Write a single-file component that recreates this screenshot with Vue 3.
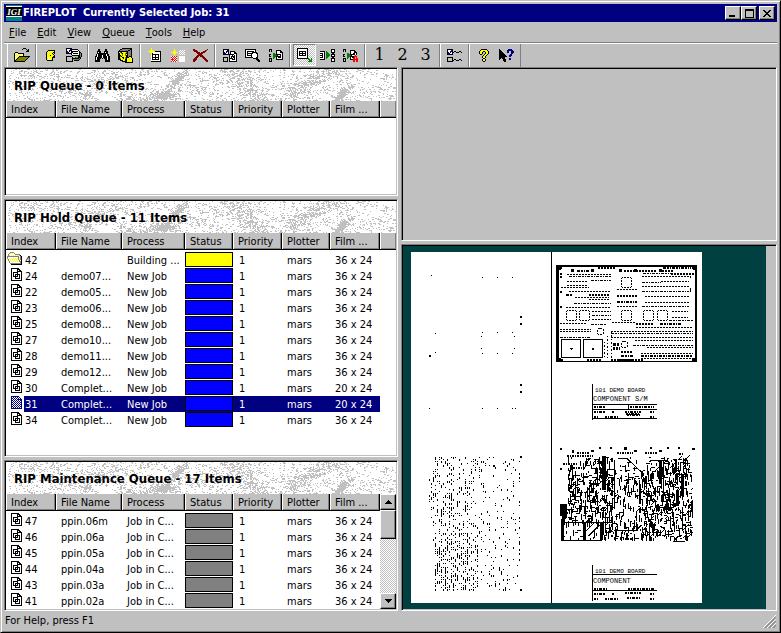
<script setup>
import { h } from 'vue'

const palette = {
  k: '#000', w: '#fff', y: '#ff0', g: '#808080', l: '#c0c0c0', n: '#000080', b: '#0000ff',
  r: '#f00', m: '#800000', G: '#008000', o: '#808000', e: '#00e000'
}

const icons = {
  open: `
.........kkk....
........k...k.k.
.............kk.
............kkk.
.kkk............
kywykkkkkk......
kwywywywyk......
kywywywywk......
kwywykkkkkkkkkkk
kywykoooooooook.
kwykoooooooook..
kykoooooooook...
kkoooooooook....
kkkkkkkkkkk.....`,
  login: `
..kkkkkkk
.kyyyyyyk
kyyyyyykk
kywyyykyk
kyyyyyyk.
kyyykyyyk
kyyyyyykk
kyywyykkk
kywyyyk..
kyywyyk..
.kkkkkk..`,
  process: `
kkkkkk..........
kwwwnkkkkkkk....
kwwnnkwwwwwwk...
knwnwkkkkkkkwk..
knnwwkkwwwwwwkk.
kkkkkkwkkkkkwkgk
.....kwwwwwwwkgk
......kkkkkkkkgk
kkkkkkllllllkkgk
klllllkllGeekkk.
klllllkkkkkkkgk.
klllllkggggggk..
klllllk.kkkkk...
kkkkkkk.........`,
  find: `
...kk.....kk...
...kk.....kk...
..kkkk...kkkk..
..kwkk...kwkk..
..kkkkkkkkkkk..
.kwkkkkkkkkwkk.
.kwkkkkwkkkwkk.
kkwkkkkwkkkkwkk
kwkkkkkwkkkkwkk
kwkkkk.k.kkkwkk
kwkkk.....kkwkk
kkkkk.....kkkkk
kkkkk.....kkkkk`,
  archive: `
....kkkkkkkkkk.
..kkggggggggkk.
.kggggggggkkgk.
kkkkkkkkkkgggk.
kyokyyyyokgggk.
kkyokyyokkgggk.
kkyyoyyoykgggk.
kkkyoyyokkgggk.
kkokyyyykkgkkk.
kkyykkyokkkyyk.
kkoyykyokyyyyyk
kkkyyyykkyyyyyk
..kkkyykkyyyyyk
....kkkkkyyyyyk
.......kkkkkkkk`,
  add: `
...y..........
...y..........
..yyy.........
yyyyyyykkkkkk.
..yyywwwwwwwk.
...ykwwwwwwwk.
...ykkkkkkkwk.
...wkwwkwwkwk.
...wkwwkwwkwk.
...wkkkkkkkwk.
...wkwwkwwkwk.
...wkkkkkkkwk.
...wwwwwwwwwk.
...kkkkkkkkkk.`,
  step: `
...y..........
...y.....w.w.w
..yyy...w.w.w.
yyyyyyy..w.w.w
..yyy...w.w.w.
...y.....w.w.w
...y..........
wrwrwr..wwwwww
rwrwrw..wwwwww
wrwrwr..wwwwww
rrrwrw..wwwwww
wrwrwr..wwwwww
rwrwrw..wwwwww`,
  remove: `
mm............m
mmmm........mm.
.mmmm.....mmm..
...mmmm.mmmm...
....mmmmmm.....
.....mmmm......
....mmmmmm.....
...mmm.mmmm....
..mmm....mmm...
.mmm......mmm..
mmmm.......mmm.
mmm.........mmm
mm...........mm`,
  reqdoc: `
kkkkkk........
kwwwnk........
kwwnnk.kkkkk..
knwnwk.kwwwkk.
knnwwk.kwwwkkk
kkkkkkkkkkkwwk
......kwwkwkwk
......kwkkkkwk
kkkkk.kwkwkkwk
klllk.kkkkwkwk
klllk.kwwkkkwk
klllk.kwwwwwwk
kkkkk.kkkkkkkk`,
  preview: `
kkkkkkkkkkk....
kwwwwwwwwwk....
kwkkkkkkkwk....
kwkwwwwkkkkk...
kwkkkkkkwwwkk..
kwkwwwkwwwwwk..
kwkkkkkwwwwwk..
kwwwwwkwwwwwk..
kkkkkkkkwwwkk..
........kkkkk..
...........kkk.
............kkk
.............kk`,
  send: `
kkk...........
k.k....kkkkk..
k.k....kwwwkk.
.......kwwwkkk
....GG.kwwwwwk
kk..GGGkkkkkwk
k...GGGGkwwkwk
kk..GGGkkkkkwk
....GG.kwkkkwk
kkk.G..kwwwwwk
k.k....kkkkkkk
k.k...........
kkk...........`,
  fit: `
kkkkkkkkkkk....
kwwwwwwwwwk....
kwwwwwwwwwk....
kwkkkkkkkwk....
kwkwwkwwkwk....
kwkkkkkkkwk....
kwkwwkwwkwk....
kwkkkkkkkwk....
kwwwwwwwwwk....
kwwwwwwwwwk....
kkkkkkkkkkkG..G
...........GG.G
............GGG
...........GGGG`,
  release: `
...........kkkk
...........kwwk
kkkkk.G....kwwk
wwwwk.GG...kkkk
kkkwk.GGG...kk.
wwkwk.GGGG.kkkk
kkkwk.GGGG.kwwk
wwkwk.GGG..kkkk
kkkwk.GG....kk.
wwwwk.G....kkkk
kkkkk......kwwk
...........kwwk
...........kkkk`,
  auto: `
kkk.............
k.k....kkkkk....
k.k....kwwwkk...
.......kwwwkkk..
....GG.kwwkkwk..
kk..GGGkkkkkwk..
k...GGGGkww.r...
kk..GGGkkkkrrr..
....GG.kwkkr.r..
kkk.G..kwwrr.rr.
k.k....kkkrrrrr.
k.k.......rr.rr.
kkk.......rr.rr.`,
  options: `
kkkkkk.........
kwwwnk.........
kwwnnk.kk...kk.
knwnwkk..kkk..k
knnwwk.........
kkkkkk.........
...............
...............
kkkkkk.........
kllllk.........
kllllk.kk...kk.
kllllkk..kkk..k
kkkkkk.........`,
  help: `
..kkkkkk.
.kyyyyyyk
kyyykkyyyk
kyyk..kyyk
kyyk..kyyk
.kk..kyyk.
....kyyk..
...kyyk...
...kyyk...
....kk....
...kyyk...
...kyyk...
....kk....`,
  context: `
k........nnnn..
kk......nnnnnn.
kkk.....nn..nnn
kkkk....nn..nnn
kkkkk.......nn.
kkkkkk.....nn..
kkkkkkk...nnn..
kkkkkkkk..nn...
kkkkkk.........
kk.kkk....nn...
k...kkk...nn...
....kkk........
.....kk........`,
  doc: `
kkkkkkkk...
kwwwwwkkk..
kwwwwwkwkk.
kwwwwwkkkkk
kwkkkkkwwwk
kwkwwwkwwwk
kwkwkkkkkwk
kwkwkwkwkwk
kwkkkkkwkwk
kwwwkwwwkwk
kwwwkkkkkwk
kwwwwwwwwwk
kkkkkkkkkkk`,
  docSelected: `
nnnnnnnn...
nwnwnwnwn..
nnwnwnwnwn.
nwnwnwnnnnn
nnwnwnwnwnn
nwnwnwnwnwn
nnwnwnwnwnn
nwnwnwnwnwn
nnwnwnwnwnn
nwnwnwnwnwn
nnwnwnwnwnn
nwnwnwnwnwn
nnnnnnnnnnn`,
  folder: `
...gggg........
..gywywg.......
.gwwwwwwggggg..
.gywywywywywgk.
ggggggggggggwgk
gwwwwwwwwwwgygk
gwywywywywygwgk
.gwywywywywgygk
.gwywywywywygwk
..gwywywywywggk
..gwwwwwwwwwwgk
...gggggggggggk
....kkkkkkkkkkk`,
  up: `
...k...
..kkk..
.kkkkk.
kkkkkkk`,
  down: `
kkkkkkk
.kkkkk.
..kkk..
...k...`,
  min: `
........
........
........
........
........
........
kkkkkk..
kkkkkk..`,
  max: `
kkkkkkkkk
kkkkkkkkk
k.......k
k.......k
k.......k
k.......k
k.......k
k.......k
kkkkkkkkk`,
  close: `
kk....kk
.kk..kk.
..kkkk..
...kk...
..kkkk..
.kk..kk.
kk....kk`
}

const built = {}
function buildIcon(name) {
  if (built[name]) return built[name]
  const rows = icons[name].trim().split('\n')
  const byColor = {}
  rows.forEach((row, y) => {
    for (let x = 0; x < row.length; x++) {
      const c = row[x]
      if (c === '.') continue
      let n = 1
      while (row[x + n] === c) n++
      byColor[c] = (byColor[c] || '') + `M${x} ${y}h${n}v1h-${n}z`
      x += n - 1
    }
  })
  return (built[name] = { w: Math.max(...rows.map(r => r.length)), h: rows.length, byColor })
}

const PixelIcon = (props) => {
  const i = buildIcon(props.name)
  return h('svg', { width: i.w, height: i.h, viewBox: `0 0 ${i.w} ${i.h}`, 'shape-rendering': 'crispEdges', 'aria-hidden': 'true' },
    Object.entries(i.byColor).map(([c, d]) => h('path', { d, fill: palette[c] })))
}
PixelIcon.props = ['name']

function makeRandom(seed) {
  let s = seed
  return () => {
    s = (s * 1664525 + 1013904223) >>> 0
    return s / 4294967296
  }
}

// Speckled marble behind the queue headings
function marble() {
  const rnd = makeRandom(77)
  const veins = [
    [172, 9, 17, 4, -0.8, 0.9], [154, 27, 16, 4, -0.15, 0.9], [80, 26, 8, 4, -0.7, 0.8],
    [336, 24, 11, 4, -0.8, 1.3], [232, 10, 26, 9, 0.6, 0.3], [250, 24, 18, 8, 0.9, 0.2], [312, 8, 26, 8, -0.6, 0.3],
    [290, 22, 24, 8, -0.7, 0.2], [48, 6, 26, 8, 0.4, 0.15], [96, 12, 24, 7, 0.5, 0.2], [208, 24, 14, 6, 0.2, 0.15]
  ]
  let d = ''
  for (let y = 0; y < 32; y++) {
    for (let x = 2; x < 390; x++) {
      let p = 0.13 + 0.05 * Math.sin(x / 17 + y / 5) + 0.05 * Math.sin(x / 7 - y / 3)
      for (const [cx, cy, a, b, t, s] of veins) {
        const dx = x - cx, dy = y - cy
        const u = (dx * Math.cos(t) + dy * Math.sin(t)) / a
        const v = (-dx * Math.sin(t) + dy * Math.cos(t)) / b
        p += s * Math.exp(-(u * u + v * v) * 1.4)
      }
      if (rnd() < p) {
        const n = rnd() < 0.35 ? 2 : 1
        d += `M${x} ${y}h${n}v1h-${n}z`
      }
    }
  }
  return d
}
const marblePath = marble()

// Registration marks and drill hits of the left film: x, y, size
const marks = [
  [20, 23, 1], [71, 25, 1], [86, 25, 1], [101, 25, 1], [109, 64, 2], [109, 71, 2], [24, 81, 1], [71, 80, 1], [86, 80, 1],
  [101, 80, 1], [70, 84, 1], [103, 84, 1], [70, 96, 1], [103, 96, 1], [24, 100, 1], [18, 103, 2], [71, 101, 1], [86, 101, 1],
  [101, 101, 1], [109, 132, 2], [109, 139, 2], [18, 156, 1], [71, 156, 1], [86, 156, 1], [101, 156, 1], [104, 156, 1],
  [109, 204, 2], [82, 213, 2], [109, 337, 2]
]

function drills() {
  const rnd = makeRandom(9)
  let d = ''
  const put = (x, y, n) => { d += `M${x} ${y}h1v${n}h-1z` }
  for (let y = 205; y < 338; y += 2) {
    for (let x = 18; x < 109; x += 2) {
      let p
      if (y < 252) {
        p = x < 42 ? 0.3 : 0.2
        if (x < 24 && y < 218) p = 0.04
      } else if (y < 288) p = x < 60 ? (x < 28 ? 0.18 : 0.34) : 0.2
      else p = x < 24 ? 0 : x < 68 ? 0.45 : 0.16
      if (x > 72 && x % 6 !== 0) p *= 0.5
      if (y > 254 && y < 264 && x > 60) p = 0.04
      if (x > 98 && y > 300) p *= 0.6
      if (rnd() < p) put(x, y, rnd() < 0.5 ? 2 : 1)
    }
  }
  return d
}
const drillPath = drills()

// Pad rows of the solder mask: x1, x2, y, thickness
const padRows = [
  [158, 200, 24, 1], [156, 176, 29, 1], [156, 176, 33, 1], [180, 200, 28, 1], [158, 200, 39, 1], [164, 198, 45, 1], [163, 200, 51, 1], [155, 200, 55, 1],
  [181, 200, 59, 1], [181, 200, 63, 1], [181, 200, 67, 1], [149, 176, 71, 1], [180, 196, 72, 1], [149, 180, 77, 1], [149, 180, 79, 1],
  [149, 180, 85, 1], [206, 226, 37, 1], [206, 226, 43, 2], [206, 226, 49, 2], [206, 226, 54, 1],
  [231, 278, 24, 1], [231, 250, 30, 1], [250, 278, 29, 1], [231, 278, 34, 1], [231, 278, 39, 1], [234, 278, 44, 1],
  [234, 278, 50, 1], [231, 278, 54, 1], [261, 277, 59, 1], [261, 277, 65, 1], [258, 282, 68, 1], [201, 224, 70, 1],
  [225, 242, 71, 2], [249, 270, 71, 2], [225, 282, 75, 1], [200, 282, 79, 1], [200, 282, 81, 1], [200, 282, 85, 1],
  [224, 282, 88, 1], [222, 282, 93, 1], [236, 282, 95, 1], [230, 282, 101, 1], [230, 282, 103, 2], [230, 282, 106, 1],
  [156, 200, 22, 1], [166, 178, 18, 2], [213, 245, 18, 2], [248, 262, 18, 2], [232, 260, 21, 1], [260, 284, 21, 2], [187, 205, 15, 2], [252, 280, 15, 2],
  [176, 190, 107, 2], [200, 232, 107, 2], [202, 209, 91, 3], [202, 209, 95, 3], [210, 222, 99, 2], [210, 222, 103, 2],
  [178, 198, 42, 2], [178, 198, 47, 1], [155, 162, 42, 2], [150, 178, 35, 1]
]
const chips = [
  [155, 58, 11], [168, 58, 11], [232, 58, 11], [246, 58, 11], [210, 25, 11], [210, 58, 11], [186, 76, 7], [210, 89, 7]
]

// Copper traces of the component layer
function traces() {
  const rnd = makeRandom(31)
  let d = ''
  for (let i = 0; i < 1650; i++) {
    const x = 150 + Math.floor(rnd() * 131)
    const y = 205 + Math.floor(rnd() * 82)
    if (x < 157 && y < 252) continue
    if (x < 174 && y < 222 && rnd() < 0.7) continue
    if (x > 203 && x < 250 && y < 218 && rnd() < 0.75) continue
    if (x > 203 && x < 230 && rnd() < 0.45) continue
    if (x > 276 && y < 250 && rnd() < 0.6) continue
    if (x > 152 && x < 192 && y > 270 && rnd() < 0.8) continue
    const n = 1 + Math.floor(rnd() * 6)
    const k = rnd()
    const below = Math.min(n + 1, 289 - y)
    const across = Math.min(n, 282 - x)
    if (k < 0.62) d += `M${x + 0.5} ${y}v${below}`
    else if (k < 0.95) d += `M${x} ${y + 0.5}h${Math.ceil(across / 2) + 1}`
    else d += `M${x} ${y}l${across} ${-across}`
  }
  return d
}
const tracePath = traces()

const jobs = (list) => list.map(([index, file, film]) => ({ index, file, film, process: 'New Job', status: 'blue', icon: 'doc' }))
const holdRows = [
  { index: '42', file: '', process: 'Building ...', status: 'yellow', film: '36 x 24', icon: 'folder' },
  ...jobs([
    ['24', 'demo07...', '36 x 24'], ['22', 'demo05...', '36 x 24'], ['23', 'demo06...', '36 x 24'], ['25', 'demo08...', '36 x 24'],
    ['27', 'demo10...', '36 x 24'], ['28', 'demo11...', '36 x 24'], ['29', 'demo12...', '36 x 24'], ['30', 'Complet...', '20 x 24'],
    ['31', 'Complet...', '20 x 24'], ['34', 'Complet...', '36 x 24']
  ])
]
const selected = '31'
const maintenanceRows = [['47', 'ppin.06m'], ['46', 'ppin.06a'], ['45', 'ppin.05a'], ['44', 'ppin.04a'], ['43', 'ppin.03a'], ['41', 'ppin.02a']]
  .map(([index, file]) => ({ index, file, process: 'Job in C...', status: 'gray', film: '36 x 24', icon: 'doc' }))

const queues = [
  { id: 'rip', title: 'RIP Queue - 0 Items', rows: [] },
  { id: 'hold', title: 'RIP Hold Queue - 11 Items', rows: holdRows },
  { id: 'maintenance', title: 'RIP Maintenance Queue - 17 Items', rows: maintenanceRows, scroll: true }
]
const columns = ['Index', 'File Name', 'Process', 'Status', 'Priority', 'Plotter', 'Film ...']
const menus = ['File', 'Edit', 'View', 'Queue', 'Tools', 'Help']
const toolGroups = [
  ['open'], ['login', 'process'], ['find', 'archive'], ['add', 'step', 'remove'], ['reqdoc', 'preview', 'send'],
  ['fit', 'release', 'auto'], ['1', '2', '3'], ['options'], ['help', 'context']
]
</script>

<template>
  <div class="window">
    <header class="titlebar">
      <svg class="logo" width="16" height="16" viewBox="0 0 16 16" aria-hidden="true">
        <rect width="16" height="16" fill="#008080" />
        <rect y="1" width="16" height="11" fill="#000" />
        <path d="M0 1.5h16M0 11.5h16" stroke="#fff" />
        <text x="8" y="10" text-anchor="middle" class="logo-text">IGI</text>
      </svg>
      <h1>FIREPLOT&nbsp; Currently Selected Job: 31</h1>
      <div class="caption-buttons">
        <button class="raised" aria-label="Minimize"><PixelIcon name="min" /></button>
        <button class="raised" aria-label="Maximize"><PixelIcon name="max" /></button>
        <button class="raised close" aria-label="Close"><PixelIcon name="close" /></button>
      </div>
    </header>

    <nav class="menubar">
      <button v-for="m in menus" :key="m"><u>{{ m[0] }}</u>{{ m.slice(1) }}</button>
    </nav>

    <div class="toolbar" role="toolbar">
      <div v-for="(group, gi) in toolGroups" :key="gi" class="tool-group">
        <button v-for="t in group" :key="t" class="tool" :class="{ pressed: t === 'fit' }" :aria-label="t">
          <PixelIcon v-if="icons[t]" :name="t" />
          <span v-else class="digit">{{ t }}</span>
        </button>
      </div>
    </div>

    <main class="workspace">
      <div class="queues">
        <section v-for="q in queues" :key="q.id" class="sunken queue">
          <div class="heading">
            <svg class="marble" width="390" height="32" viewBox="0 0 390 32" preserveAspectRatio="none" shape-rendering="crispEdges" aria-hidden="true">
              <path :d="marblePath" fill="#c0c0c0" />
            </svg>
            <h2>{{ q.title }}</h2>
          </div>
          <div class="list">
            <table>
              <colgroup>
                <col class="c-index"><col class="c-file"><col class="c-process"><col class="c-status">
                <col class="c-priority"><col class="c-plotter"><col class="c-film"><col v-if="!q.scroll">
              </colgroup>
              <thead>
                <tr>
                  <th v-for="c in columns" :key="c" scope="col">{{ c }}</th>
                  <td v-if="!q.scroll" class="rest"></td>
                </tr>
              </thead>
              <tbody>
                <tr v-for="r in q.rows" :key="r.index" :class="{ selected: r.index === selected }">
                  <td class="index">
                    <div class="index-cell">
                      <span class="row-icon"><PixelIcon :name="r.index === selected ? 'docSelected' : r.icon" /></span>
                      <span class="index-no">{{ r.index }}</span>
                    </div>
                  </td>
                  <td>{{ r.file }}</td>
                  <td>{{ r.process }}</td>
                  <td class="status"><div class="chip" :class="r.status"></div></td>
                  <td class="priority">1</td>
                  <td>mars</td>
                  <td>{{ r.film }}</td>
                  <td v-if="!q.scroll" class="blank"></td>
                </tr>
              </tbody>
            </table>
            <div v-if="q.scroll" class="scrollbar">
              <button class="raised arrow" aria-label="Scroll up"><PixelIcon name="up" /></button>
              <div class="raised thumb"></div>
              <button class="raised arrow end" aria-label="Scroll down"><PixelIcon name="down" /></button>
            </div>
          </div>
        </section>
      </div>

      <div class="previews">
        <section class="sunken overview"></section>
        <section class="sunken preview">
          <div class="stage">
            <svg class="film" width="291" height="351" viewBox="0 0 291 351" shape-rendering="crispEdges" role="img" aria-label="Film preview">
              <rect width="291" height="351" fill="#fff" />
              <rect x="140" width="1" height="351" />
              <rect v-for="(m, i) in marks" :key="'m' + i" :x="m[0]" :y="m[1]" :width="m[2]" :height="m[2]" />
              <path :d="drillPath" />

              <path d="M145 13h141v97h-141zM148 15v94h136v-94z" fill-rule="evenodd" />
              <path d="M148 15h3v2h-1v1h-2zM281 15h3v3h-2v-1h-1zM148 106h2v1h2v2h-4zM281 106h3v3h-3zM160 17h3v3h-3zM180 17h3v3h-3zM208 17h3v3h-3zM223 17h3v3h-3zM248 17h3v3h-3zM149 21h2v2h-2zM149 24h2v2h-2zM149 39h2v2h-2zM149 54h2v2h-2zM279 24h1v2h-1zM279 36h1v4h-1zM208 107h14v3h-14z" />
              <line
                v-for="(p, i) in padRows" :key="'p' + i" :x1="p[0]" :x2="p[1]" :y1="p[2] + p[3] / 2" :y2="p[2] + p[3] / 2"
                stroke="#000" :stroke-width="p[3]" :stroke-dasharray="i % 3 ? '2 1' : '3 1 2 1 1 1'"
              />
              <rect
                v-for="(c, i) in chips" :key="'c' + i" :x="c[0] + 0.5" :y="c[1] + 0.5" :width="c[2] - 1" :height="c[2] - 1" rx="2"
                fill="none" stroke="#000" stroke-dasharray="2 1"
              />
              <path d="M150.5 87.500h19v18h-19zM172.500 87.500h19v18h-19z" fill="none" stroke="#000" />
              <path d="M159 96h3v1h-1v1h-1v-1h-1zM181 96h2v2h-2z" />
              <path d="M196.500 84v24M193.500 90v16M200.500 80v28" fill="none" stroke="#000" stroke-dasharray="1 2 2 2" />

              <path d="M181.500 132v36M181 152.500h65M181 157.500h65M181 166.500h65M217.500 152v5" fill="none" stroke="#000" />
              <path d="M183 155h12M219 155h24M183 160h11M201 160h2M214 160h16M239 160h4M183 165h5M194 165h13M216 163h14M239 165h4M215 162h14" fill="none" stroke="#000" stroke-width="2" stroke-dasharray="2 1 1 1 3 1" />
              <text x="184" y="140" class="plate small">101 DEMO BOARD</text>
              <text x="182" y="149" class="plate">COMPONENT S/M</text>

              <path :d="tracePath" fill="none" stroke="#000" />
              <path d="M149 252h7v14h-2v6h-3v-8h-2zM150 268h3v20h-3zM191 204h4v34h-4zM228 232h2v20h-2zM248 208h3v24h-3zM270 222h3v22h-3zM265 238h3v16h-3zM172 270h3v18h-3zM189 270h3v18h-3z" />
              <path d="M150 270.500h41M150 288.500h41M177.500 284l11-11M175 279l8-8M203.500 208v30M207 206.500h9l16 15M238.500 208.500h14v40M203 278.500h22l5-5M281.500 248v18M262 289.500h12" fill="none" stroke="#000" />
              <path d="M149 196h2v2h-2zM161 198h2v3h-2zM180 198h3v2h-3zM188 195h2v2h-2zM199 195h2v2h-2zM213 195h3v3h-3zM223 198h3v2h-3zM239 195h2v2h-2zM248 198h3v2h-3zM256 195h2v2h-2zM267 195h2v2h-2zM281 196h3v2h-3zM149 216h2v2h-2z" />
              <path d="M166 201h12M206 201h16M234 201h12M268 202h5M156 204h26M209 287h12M152 212h14M162 216h12" fill="none" stroke="#000" stroke-width="2" stroke-dasharray="2 1 1 1" />

              <path d="M181.500 313v36M181 322.500h65M181 338.500h65" fill="none" stroke="#000" />
              <path d="M183 337h14M217 337h26M183 342h11M201 342h2M214 341h16M239 342h4M183 347h5M194 347h13M216 346h14M239 347h4" fill="none" stroke="#000" stroke-width="2" stroke-dasharray="2 1 1 1 3 1" />
              <text x="184" y="321" class="plate small">101 DEMO BOARD</text>
              <text x="182" y="331" class="plate">COMPONENT</text>
            </svg>
          </div>
        </section>
      </div>
    </main>

    <footer class="statusbar">
      <span>For Help, press F1</span>
      <svg class="grip" width="13" height="13" viewBox="0 0 13 13" aria-hidden="true">
        <path d="M0 13L13 0M4 13l9-9M8 13l5-5" stroke="#fff" />
        <path d="M1.500 13L13 1.500M2.500 13L13 2.500M5.500 13L13 5.500M6.500 13L13 6.500M9.500 13L13 9.500M10.500 13l2.500-2.500" stroke="#808080" />
      </svg>
    </footer>
  </div>
</template>

<style>
body {
  margin: 0;
  background: #c0c0c0;
}
</style>

<style scoped>
.window {
  box-sizing: border-box;
  display: flex;
  flex-direction: column;
  height: 100vh;
  padding: 3px;
  border: 1px solid;
  border-color: #c0c0c0 #000 #000 #c0c0c0;
  box-shadow: inset 1px 1px #fff, inset -1px -1px #808080;
  background: #c0c0c0;
  color: #000;
  font: 11px/16px "DejaVu Sans Condensed", "Noto Sans", sans-serif;
  overflow: hidden;
}
button {
  display: flex;
  align-items: center;
  justify-content: center;
  margin: 0;
  padding: 0;
  border: 0;
  background: none;
  color: inherit;
  font: inherit;
}
svg {
  display: block;
  flex: none;
}
.raised {
  background: #c0c0c0;
  border: 1px solid;
  border-color: #fff #000 #000 #fff;
  box-shadow: inset -1px -1px #808080;
}
.sunken {
  min-width: 0;
  min-height: 0;
  overflow: hidden;
  border: 1px solid;
  border-color: #808080 #fff #fff #808080;
}

.titlebar {
  display: flex;
  align-items: center;
  flex: none;
  height: 18px;
  padding: 0 2px;
  background: #000080;
  color: #fff;
}
.logo-text {
  font: italic bold 9px "Liberation Serif", serif;
  fill: #fff;
}
h1 {
  flex: 1;
  margin: 0 0 0 1px;
  font-size: 11px;
  line-height: 16px;
  font-weight: bold;
  white-space: nowrap;
}
.caption-buttons {
  display: flex;
}
.caption-buttons button {
  box-sizing: border-box;
  width: 16px;
  height: 14px;
}
.caption-buttons .close {
  margin-left: 2px;
}

.menubar {
  display: flex;
  flex: none;
  gap: 11px;
  height: 20px;
  box-sizing: border-box;
  padding: 2px 0 0 5px;
  align-items: center;
}

.toolbar {
  display: flex;
  flex: none;
  height: 23px;
  padding-left: 3px;
  border-top: 1px solid #808080;
  box-shadow: inset 0 1px #fff;
  padding-top: 1px;
}
.tool-group {
  display: flex;
  padding-right: 2px;
  padding-left: 2px;
  border-left: 1px solid #fff;
  border-right: 1px solid #808080;
}
.tool {
  box-sizing: border-box;
  width: 23px;
  height: 22px;
}
.tool.pressed {
  border: 1px solid;
  border-color: #808080 #fff #fff #808080;
  background: repeating-conic-gradient(#fff 0 25%, #c0c0c0 0 50%) 0 0 / 2px 2px;
}
.digit {
  font: 16px/20px "DejaVu Serif", serif;
}

.workspace {
  flex: 1;
  min-height: 0;
  display: grid;
  grid-template-columns: 394fr 376fr;
  gap: 3px;
}
.queues {
  display: grid;
  grid-template-rows: 129fr 258fr 151fr;
  gap: 3px;
  min-width: 0;
  min-height: 0;
}
.previews {
  display: grid;
  grid-template-rows: 174fr 367fr;
  gap: 3px;
  min-width: 0;
  min-height: 0;
}
.queue {
  display: flex;
  flex-direction: column;
  background: #fff;
  box-shadow: inset 1px 1px #000, inset -1px -1px #c0c0c0;
  padding: 1px;
}
.heading {
  display: grid;
  flex: none;
  height: 32px;
  align-items: center;
}
.heading > * {
  grid-area: 1 / 1;
}
.marble {
  width: 100%;
}
h2 {
  margin: 0;
  padding-left: 8px;
  font-size: 13px;
  line-height: 18px;
  font-weight: bold;
  padding-top: 2px;
}
.list {
  flex: 1;
  min-height: 0;
  display: flex;
  overflow: hidden;
}
table {
  flex: 1;
  min-width: 0;
  width: 100%;
  align-self: flex-start;
  table-layout: fixed;
  border-collapse: separate;
  border-spacing: 0;
}
.c-index { width: 50px; }
.c-file { width: 66px; }
.c-process { width: 63px; }
.c-status { width: 48px; }
.c-priority { width: 49px; }
.c-plotter { width: 48px; }
.c-film { width: 50px; }
th, td {
  padding: 0 0 0 5px;
  text-align: left;
  font-weight: normal;
  white-space: nowrap;
}
th, .rest {
  box-sizing: border-box;
  height: 17px;
  padding-top: 2px;
  line-height: 14px;
  background: #c0c0c0;
  border-bottom: 1px solid #000;
  border-right: 1px solid #000;
  box-shadow: inset 1px 0 #fff, inset -1px -1px #808080;
}
.rest {
  border-right: 0;
}
tbody::before {
  content: "";
  display: table-row;
  height: 2px;
}
tbody td {
  height: 14px;
  padding-top: 2px;
  line-height: 14px;
}
tbody .index,
tbody .status {
  height: 16px;
  padding: 0;
}
tbody .priority {
  padding-left: 6px;
}
.index-cell {
  display: flex;
  height: 16px;
}
.row-icon {
  display: flex;
  justify-content: flex-end;
  width: 16px;
  margin-right: 2px;
}
.index-no {
  flex: 1;
  padding: 2px 0 0 1px;
}
.chip {
  box-sizing: border-box;
  height: 15px;
  margin-bottom: 1px;
  border: 1px solid #000;
}
.chip.yellow { background: #ff0; }
.chip.blue { background: #00f; }
.chip.gray { background: #808080; }
.selected td:not(.index):not(.blank),
.selected .index-no {
  background: #000080;
  color: #fff;
}

.scrollbar {
  display: flex;
  flex-direction: column;
  flex: none;
  width: 16px;
  background: repeating-conic-gradient(#fff 0 25%, #c0c0c0 0 50%) 0 0 / 2px 2px;
}
.arrow {
  box-sizing: border-box;
  height: 16px;
  flex: none;
}
.arrow.end {
  margin-top: auto;
}
.thumb {
  height: 27px;
}

.overview {
  box-shadow: inset 1px 1px #000;
}
.preview {
  padding: 1px 10px 1px 1px;
  box-shadow: inset 1px 1px #000;
}
.stage {
  box-sizing: border-box;
  height: 100%;
  padding: 6px 8px;
  background: #004040;
  overflow: hidden;
}
.plate {
  font: 7px "Liberation Mono", monospace;
}
.plate.small {
  font-size: 6px;
}

.statusbar {
  display: flex;
  flex: none;
  justify-content: space-between;
  height: 18px;
  padding: 0 1px;
}
.statusbar span {
  padding-top: 2px;
}
.grip {
  align-self: flex-end;
  margin-bottom: 1px;
}
</style>
